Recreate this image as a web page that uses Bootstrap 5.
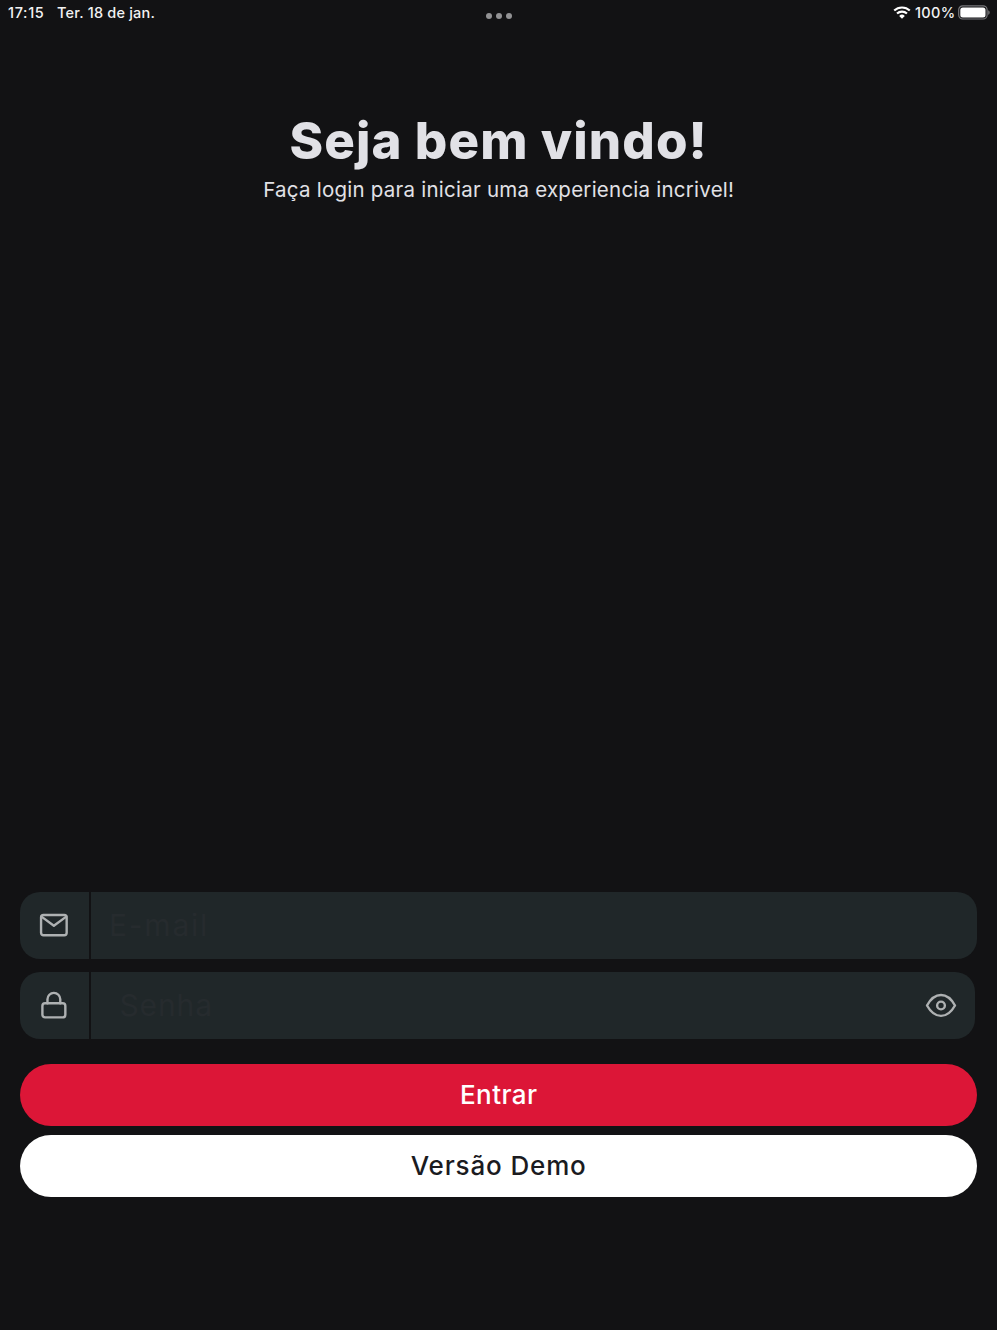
<!DOCTYPE html>
<html lang="pt-BR">
<head>
    <meta charset="utf-8">
    <title>Login</title>
    <meta name="viewport" content="width=device-width, initial-scale=1">
    <link href="https://cdn.jsdelivr.net/npm/bootstrap@5.3.0/dist/css/bootstrap.min.css" rel="stylesheet">
    <style>
        body {
            background: #fff;
            font-family: Inter, sans-serif;
            overflow: hidden;
        }

        .screen {
            width: 997.4px;
            height: 1329.5px;
            background: #121214;
            color: #e1e1e6;
        }

        .status-bar {
            display: grid;
            grid-template-columns: 1fr auto 1fr;
            height: 25px;
            padding: 0 7px 0 8px;
            font-size: 14.5px;
            font-weight: 500;
            line-height: 25px;
            color: #f2f2f3;
        }

        .clock {
            width: 49px;
            letter-spacing: 0.65px;
        }

        .date {
            letter-spacing: 0.2px;
        }

        .percent {
            margin: 0 3px 0 4px;
            letter-spacing: 0.3px;
        }

        .dots {
            margin-top: 13px;
            gap: 3.8px;
        }

        .dots span {
            width: 6px;
            height: 6px;
            background: #929294;
        }

        .welcome {
            height: 867px;
            padding-top: 86px;
            white-space: nowrap;
        }

        .welcome h1 {
            font-size: 51px;
            font-weight: 800;
            line-height: 60px;
            letter-spacing: 1.1px;
        }

        .welcome p {
            font-size: 20.5px;
            line-height: 30px;
            letter-spacing: 0.24px;
            margin-top: 4px;
        }

        .form-area {
            padding: 0 20px;
        }

        .field {
            height: 67px;
            margin-bottom: 13px;
            gap: 2.4px;
        }

        .field-icon {
            flex: 0 0 69px;
            padding: 0 1px 2px 0;
            background: #202729;
            border-radius: 20px 0 0 20px;
        }

        .field .form-control,
        .field-eye {
            background: #202729;
            border: 0;
            border-radius: 0 20px 20px 0;
        }

        .field .form-control {
            font-size: 30px;
            line-height: 40px;
            letter-spacing: 1.8px;
            padding: 0 0 2px 17.5px;
            color: #e1e1e6;
        }

        .field .form-control::placeholder {
            color: #262b2e;
            opacity: 1;
        }

        .field-password {
            width: 955px;
        }

        .field-password .form-control {
            border-radius: 0;
            letter-spacing: 0.9px;
            padding-left: 28px;
        }

        .field-eye {
            width: 69px;
        }

        .actions {
            margin-top: 25px;
            row-gap: 9.5px;
        }

        .action {
            height: 61.5px;
            border: 0;
            font-size: 26px;
            font-weight: 500;
            line-height: 61px;
            padding: 0;
        }

        .action-enter,
        .action-enter:hover {
            background: #dc1637;
            color: #fff;
            letter-spacing: 0.4px;
        }

        .action-demo,
        .action-demo:hover {
            background: #fff;
            color: #1b1b1f;
            letter-spacing: 0.85px;
        }
    </style>
</head>
<body>
<div class="screen">
    <header class="status-bar">
        <div class="d-flex">
            <span class="clock">17:15</span>
            <span class="date">Ter. 18 de jan.</span>
        </div>
        <div class="dots d-flex">
            <span class="rounded-circle"></span>
            <span class="rounded-circle"></span>
            <span class="rounded-circle"></span>
        </div>
        <div class="d-flex justify-content-end align-items-center">
            <!-- wifi -->
            <svg width="18" height="13" viewBox="0 0 18 13" fill="none" stroke="#fff" stroke-width="2.1">
                <path d="M1.2 4.6a11.2 11.2 0 0 1 15.6 0M4 7.6a7.2 7.2 0 0 1 10 0"/>
                <path d="M9 12.7 6.2 9.9a4 4 0 0 1 5.6 0z" fill="#fff" stroke="none"/>
            </svg>
            <span class="percent">100%</span>
            <!-- battery -->
            <svg width="32" height="15" viewBox="0 0 32 15">
                <rect x=".7" y=".8" width="28.4" height="13.2" rx="4" fill="none" stroke="#77777a" stroke-width="1.2"/>
                <rect x="2.3" y="2.4" width="25.2" height="10" rx="2.5" fill="#fff"/>
                <path d="M30.2 5.2c2 .8 2 3.8 0 4.6z" fill="#77777a"/>
            </svg>
        </div>
    </header>

    <section class="welcome text-center">
        <h1 class="mb-0">Seja bem vindo!</h1>
        <p class="mb-0">Faça login para iniciar uma experiencia incrivel!</p>
    </section>

    <form class="form-area">
        <div class="field d-flex">
            <div class="field-icon d-flex align-items-center justify-content-center">
                <svg width="32" height="32" viewBox="0 0 24 24" fill="none" stroke="#aeb1b2" stroke-width="1.8" stroke-linecap="round" stroke-linejoin="round">
                    <rect x="2.3" y="4.5" width="19.2" height="15.2" rx="1.8"/>
                    <path d="M2.6 5.7 11.9 12.5 21.2 5.7"/>
                </svg>
            </div>
            <input type="email" class="form-control" placeholder="E-mail" aria-label="E-mail">
        </div>
        <div class="field field-password d-flex">
            <div class="field-icon d-flex align-items-center justify-content-center">
                <svg width="32" height="32" viewBox="0 0 24 24" fill="none" stroke="#aeb1b2" stroke-width="1.8" stroke-linecap="round" stroke-linejoin="round">
                    <rect x="3.3" y="10.7" width="17.2" height="10.6" rx="2"/>
                    <path d="M7.1 10.7V7.7a4.8 4.8 0 0 1 9.6 0v3"/>
                </svg>
            </div>
            <div class="d-flex flex-grow-1">
                <input type="password" class="form-control" placeholder="Senha" aria-label="Senha">
                <button type="button" class="field-eye d-flex align-items-center justify-content-center flex-shrink-0 p-0" aria-label="Mostrar senha">
                    <svg width="32" height="32" viewBox="0 0 24 24" fill="none" stroke="#aeb1b2" stroke-width="1.8" stroke-linecap="round" stroke-linejoin="round">
                        <path d="M1.5 11.6C4.2 6.8 7.9 3.8 12 3.8s7.8 3 10.5 7.8c-2.7 4.8-6.4 7.8-10.5 7.8S4.2 16.4 1.5 11.6z"/>
                        <circle cx="12" cy="11.6" r="2.9"/>
                    </svg>
                </button>
            </div>
        </div>
        <div class="actions d-grid">
            <button type="button" class="btn rounded-pill action action-enter">Entrar</button>
            <button type="button" class="btn rounded-pill action action-demo">Versão Demo</button>
        </div>
    </form>
</div>
<script src="https://cdn.jsdelivr.net/npm/bootstrap@5.3.0/dist/js/bootstrap.bundle.min.js"></script>
</body>
</html>
